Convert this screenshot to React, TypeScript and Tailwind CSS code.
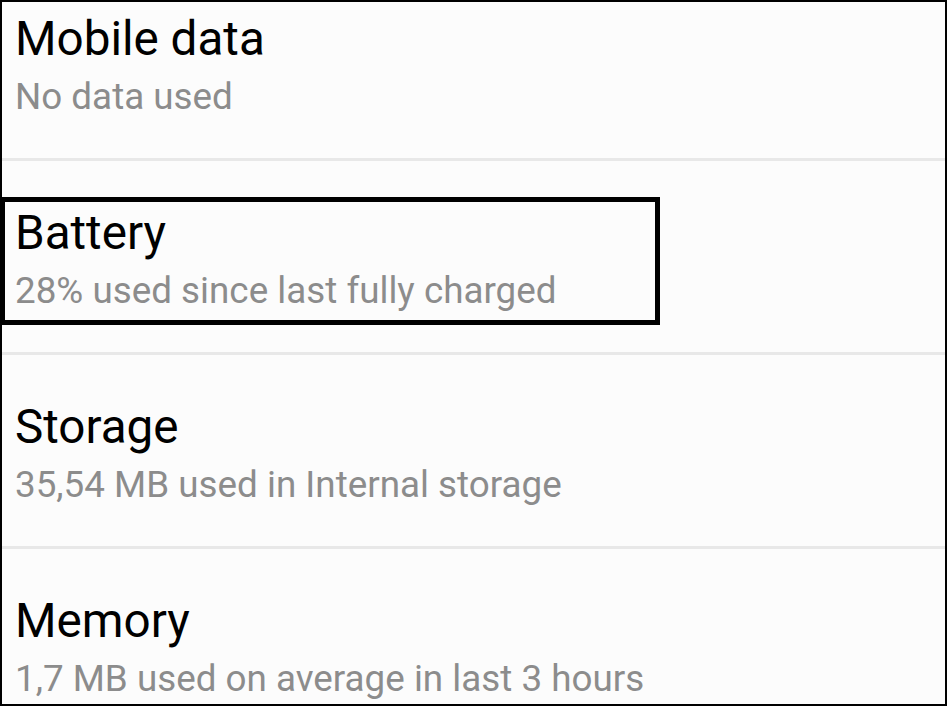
import React from 'react';

interface SettingRowProps {
    title: string;
    summary: string;
}

const rows: SettingRowProps[] = [
    { title: 'Mobile data', summary: 'No data used' },
    { title: 'Battery', summary: '28% used since last fully charged' },
    { title: 'Storage', summary: '35,54 MB used in Internal storage' },
    { title: 'Memory', summary: '1,7 MB used on average in last 3 hours' },
];

const SettingRow: React.FC<SettingRowProps> = ({ title, summary }) => {
    return (
        <div className="h-[191px] shrink-0 pl-[13px] pt-[44px]">
            <div className="text-[47.6px] leading-[56px] text-black">{title}</div>
            <div className="mt-[8px] text-[36.8px] leading-[44px] text-[#8c8c8c]">{summary}</div>
        </div>
    );
};

export default function App() {
    return (
        <div className="bg-white w-[950px] h-[708px]" style={{ fontFamily: 'Roboto, "Noto Sans", sans-serif' }}>
            <div className="relative w-[947px] h-[706px] border-2 border-black bg-[#fcfcfc] overflow-hidden">
                <div className="flex flex-col -mt-[35px]">
                    {rows.map((row, i) => (
                        <React.Fragment key={row.title}>
                            {i > 0 && <div className="h-[3px] shrink-0 bg-[#e8e8e8]" />}
                            <SettingRow {...row} />
                        </React.Fragment>
                    ))}
                </div>

                {/* highlight box around the Battery row */}
                <div className="absolute -left-[2px] top-[195px] w-[660px] h-[128px] border-[5px] border-black" />
            </div>
        </div>
    );
}
